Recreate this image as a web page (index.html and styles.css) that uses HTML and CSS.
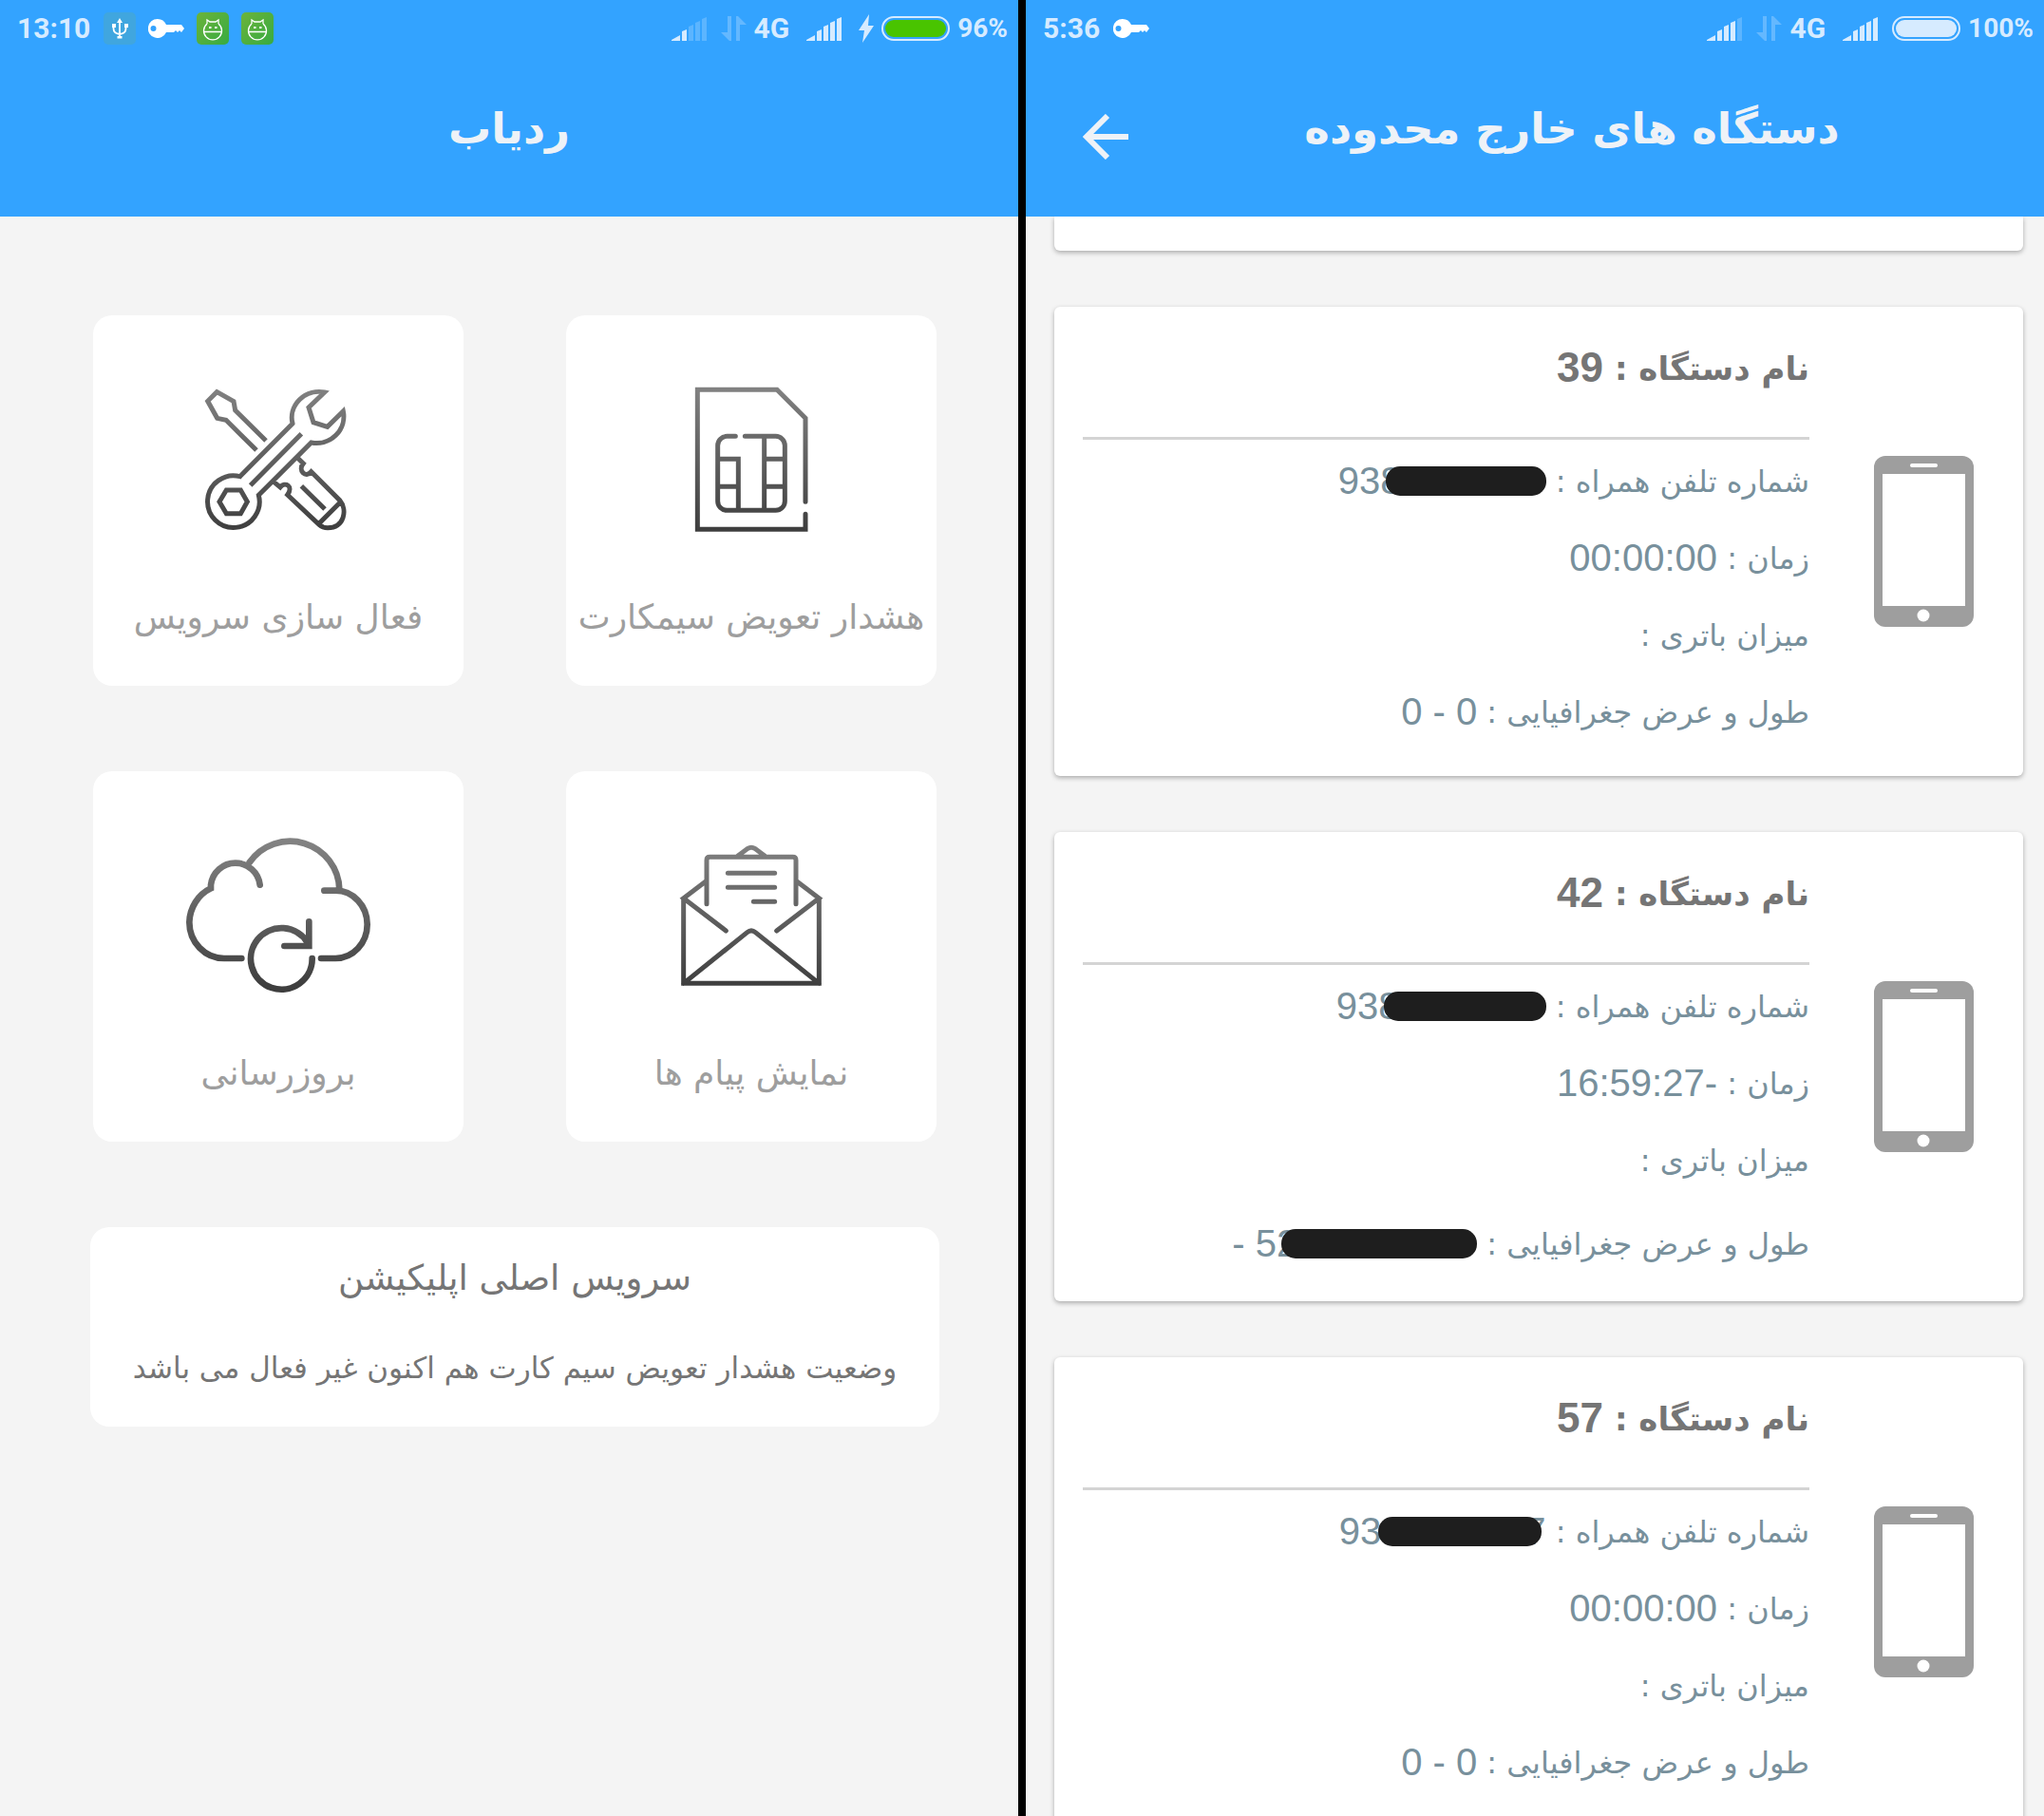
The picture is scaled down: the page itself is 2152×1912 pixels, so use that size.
FILE: index.html
```html
<!DOCTYPE html>
<html lang="fa">
<head>
<meta charset="utf-8">
<meta name="viewport" content="width=device-width, initial-scale=1">
<title>ردیاب</title>
<link rel="stylesheet" href="styles.css">
</head>
<body>
<svg class="defs" aria-hidden="true">
  <defs>
    <linearGradient id="ink" gradientUnits="userSpaceOnUse" x1="0" y1="290" x2="0" y2="745">
      <stop offset="0" stop-color="#828282"/><stop offset="1" stop-color="#3e3e3e"/>
    </linearGradient>
    <linearGradient id="green" x1="0" y1="0" x2="1" y2="1">
      <stop offset="0" stop-color="#6cb33a"/><stop offset="1" stop-color="#37ab42"/>
    </linearGradient>
    <symbol id="key" viewBox="0 0 38 20">
      <path fill="#fff" fill-rule="evenodd" d="M10 0a10 10 0 0 1 9 6h16l3 4-3 4-2-2-2 2-2-2-2 2h-8A10 10 0 1 1 10 0zM5.500 7a3 3 0 1 0 0 6 3 3 0 0 0 0-6z"/>
    </symbol>
    <symbol id="cat" viewBox="0 0 34 34">
      <rect width="34" height="34" rx="5" fill="url(#green)"/>
      <path fill="none" stroke="#fff" stroke-width="1.300" d="M11 12l0-4 3 2h6l3-2 0 4M11 12a9.500 9.500 0 1 0 12 0M8 20.500h18"/>
      <path fill="#fff" d="M13 15h2.500v2H13zM19 15h2.500v2H19z"/>
    </symbol>
    <symbol id="transfer" viewBox="0 0 27 26">
      <path fill="#d6ebff" opacity=".3" d="M7 0h4v26H9l-9-9h7zM16 0h2l9 9h-7v17h-4z"/>
    </symbol>
    <symbol id="phone" viewBox="0 0 105 180">
      <rect width="105" height="180" rx="12" fill="#9e9e9e"/>
      <path fill="#fff" d="M9 19h87v139H9z"/>
      <rect x="38" y="8" width="29" height="4" rx="2" fill="#fff"/>
      <circle cx="52" cy="168" r="6.500" fill="#fff"/>
    </symbol>
  </defs>
</svg>
<div class="screens">
  <section class="screen">
    <header class="top">
      <div class="status">
        <span class="clock">13:10</span>
        <svg class="badge-icon" viewBox="0 0 34 34"><rect width="34" height="34" rx="5" fill="#40a6df"/><path fill="none" stroke="#fff" stroke-width="1.800" d="M17 10v17M10.500 14v3q0 5 6.500 6 6.500-1 6.500-6v-3"/><path fill="#fff" d="M17 6l3 5h-6zM9 12h4v4H9zM22 12h4v4h-4zM14.500 25h5v2.500h-5z"/></svg>
        <svg class="key-icon"><use href="#key"/></svg>
        <svg class="badge-icon"><use href="#cat"/></svg>
        <svg class="badge-icon"><use href="#cat"/></svg>
        <div class="status-end">
          <svg class="signal" viewBox="0 0 37 25"><path d="M0 25v-1l9-5v6zM11 25V15l5-2v12z"/><path opacity=".25" d="M18 25V10l5-2v17zM25 25V6l5-2v21zM32 25V2l5-2v25z"/></svg>
          <svg class="transfer"><use href="#transfer"/></svg>
          <span class="network">4G</span>
          <svg class="signal" viewBox="0 0 37 25"><path d="M0 25v-1l9-5v6zM11 25V15l5-2v12zM18 25V10l5-2v17zM25 25V6l5-2v21zM32 25V2l5-2v25z"/></svg>
          <svg class="bolt" viewBox="0 0 19 30"><path d="M14 0L3 17h6L7 30 19 12h-6z"/></svg>
          <span class="battery"><span class="charge charging"></span></span>
          <span class="percent">96%</span>
        </div>
      </div>
      <div class="appbar"><h1>ردیاب</h1></div>
    </header>
    <main class="home">
      <div class="tiles">
        <button class="tile" type="button">
          <svg class="tile-icon" viewBox="339 246 600 540"><g class="line"><path d="M600 462L503 366 498 338 445 308 416 337 446 391 474 397 570 492M684 408A86 82 0 0 1 785 309L735 357 750 404 794 418 844 369A86 84 0 0 1 743 468L577 634A82 82 0 1 1 518 575L684 408V404M551 603L712 440M475 618H520L541 655 520 692H475L453 655ZM702 518L718 534C700 555 725 582 743 560L833 650C858 680 848 737 795 737Q779 737 768 727L668 633C688 605 660 590 645 609L625 592M835 656L766 725M712 605L786 678"/></g></svg>
          <span>فعال سازی سرویس</span>
        </button>
        <button class="tile" type="button">
          <svg class="tile-icon" viewBox="363 246 600 540"><g class="line round"><path d="M834 655V391L744 301H493V742H834V694M613 448H586A29 29 0 0 0 557 477V653A29 29 0 0 0 586 682H740A29 29 0 0 0 769 653V477A29 29 0 0 0 740 448H643M557 520H622V682M557 607H622M704 448V682M704 520H769M704 607H769"/></g></svg>
          <span>هشدار تعویض سیمکارت</span>
        </button>
        <button class="tile" type="button">
          <svg class="tile-icon" viewBox="339 246 600 540"><g class="line round thick"><path d="M523 657H468A110 114 0 0 1 358 543A118 122 0 0 1 426 436V425A78 78 0 0 1 581 425M548 354A156 156 0 0 1 832 440M784 443H820A100 107 0 0 1 820 657H774M746 657A97 97 0 1 1 732 608M736 541V618H658"/></g></svg>
          <span>بروزرسانی</span>
        </button>
        <button class="tile" type="button">
          <svg class="tile-icon" viewBox="363 246 600 540"><g class="line round"><path d="M449 470V736H877V470M449 736L650 575Q663 564 676 575L877 736M583 570L449 467 519 414M743 570L877 467 807 414M522 485V347Q522 337 532 337H794Q804 337 804 347V485M620 334L652 310Q663 303 674 310L706 334M589 388H737M589 433H737M670 478H737"/></g></svg>
          <span>نمایش پیام ها</span>
        </button>
      </div>
      <section class="service">
        <h2>سرویس اصلی اپلیکیشن</h2>
        <p>وضعیت هشدار تعویض سیم کارت هم اکنون غیر فعال می باشد</p>
      </section>
    </main>
  </section>

  <section class="screen">
    <header class="top">
      <div class="status">
        <span class="clock">5:36</span>
        <svg class="key-icon"><use href="#key"/></svg>
        <div class="status-end">
          <svg class="signal" viewBox="0 0 37 25"><path d="M0 25v-1l9-5v6zM11 25V15l5-2v12zM18 25V10l5-2v17zM25 25V6l5-2v21z"/><path opacity=".25" d="M32 25V2l5-2v25z"/></svg>
          <svg class="transfer"><use href="#transfer"/></svg>
          <span class="network">4G</span>
          <svg class="signal" viewBox="0 0 37 25"><path d="M0 25v-1l9-5v6zM11 25V15l5-2v12zM18 25V10l5-2v17zM25 25V6l5-2v21zM32 25V2l5-2v25z"/></svg>
          <span class="battery"><span class="charge"></span></span>
          <span class="percent">100%</span>
        </div>
      </div>
      <div class="appbar with-back">
        <button class="back" type="button" aria-label="بازگشت"><svg viewBox="0 0 48 48"><path d="M26 2L4 24l22 22M4 24h44"/></svg></button>
        <h1>دستگاه های خارج محدوده</h1>
      </div>
    </header>
    <main class="devices">
      <div class="card card-end"></div>
      <article class="card">
        <svg class="phone"><use href="#phone"/></svg>
        <div class="info">
          <h2>نام دستگاه : <span class="num">39</span></h2>
          <p>شماره تلفن همراه : <span class="num masked">938<span class="mask" style="width:169px"></span></span></p>
          <p>زمان : <span class="num">00:00:00</span></p>
          <p>میزان باتری :</p>
          <p>طول و عرض جغرافیایی : <span class="num">0 - 0</span></p>
        </div>
      </article>
      <article class="card">
        <svg class="phone"><use href="#phone"/></svg>
        <div class="info">
          <h2>نام دستگاه : <span class="num">42</span></h2>
          <p>شماره تلفن همراه : <span class="num masked">938<span class="mask" style="width:171px"></span></span></p>
          <p>زمان : <span class="num">16:59:27-</span></p>
          <p>میزان باتری :</p>
          <p class="clipped">طول و عرض جغرافیایی : <span class="num masked">- 52<span class="mask" style="width:206px"></span></span></p>
        </div>
      </article>
      <article class="card">
        <svg class="phone"><use href="#phone"/></svg>
        <div class="info">
          <h2>نام دستگاه : <span class="num">57</span></h2>
          <p>شماره تلفن همراه : <span class="num masked tail">93<span class="mask" style="width:172px"></span><span class="last">7</span></span></p>
          <p>زمان : <span class="num">00:00:00</span></p>
          <p>میزان باتری :</p>
          <p>طول و عرض جغرافیایی : <span class="num">0 - 0</span></p>
        </div>
      </article>
    </main>
  </section>
</div>
</body>
</html>
```
FILE: styles.css
```css
* { box-sizing: border-box; }
body {
  margin: 0;
  background: #000;
  font-family: "DejaVu Sans", sans-serif;
}
h1, h2, p { margin: 0; }
button { border: 0; padding: 0; font: inherit; cursor: pointer; }
.defs { position: absolute; width: 0; height: 0; }

.screens {
  display: grid;
  grid-template-columns: minmax(0, 1fr) minmax(0, 1fr);
  column-gap: 8px;
  height: 100vh;
}
.screen {
  display: flex;
  flex-direction: column;
  min-height: 0;
  overflow: hidden;
  background: #f4f4f4;
}

/* header */
.top {
  flex: none;
  height: 228px;
  background: #33a3ff;
}
.status {
  display: flex;
  align-items: center;
  gap: 13px;
  height: 60px;
  padding: 0 11px 0 18px;
  font-family: Roboto, sans-serif;
  font-weight: 700;
  font-size: 30px;
  line-height: 32px;
  color: #d6ebff;
}
.clock { margin-right: 1px; }
.badge-icon { width: 34px; height: 34px; }
.key-icon { width: 38px; height: 20px; }
.status-end { display: flex; align-items: center; gap: 8px; margin-left: auto; }
.signal { width: 37px; height: 25px; margin: 0 7px 0 10px; fill: #d6ebff; }
.transfer { width: 27px; height: 26px; }
.bolt { width: 19px; height: 30px; fill: #d6ebff; }
.battery {
  display: flex;
  width: 72px;
  height: 26px;
  padding: 2px;
  border: 2px solid #d6ebff;
  border-radius: 13px;
}
.charge { flex: 1; border-radius: 9px; background: #d6ebff; }
.charging { background: #49c400; }
.percent { font-size: 28px; }
.appbar {
  display: flex;
  align-items: center;
  height: 168px;
  color: #eef2f7;
}
.appbar h1 {
  flex: 1;
  direction: rtl;
  text-align: center;
  font-size: 45px;
  line-height: 60px;
  padding-bottom: 16px;
}
.with-back { padding-left: 60px; padding-right: 30px; }
.back { width: 48px; height: 48px; background: none; }
.back svg { display: block; width: 48px; height: 48px; fill: none; stroke: #eef2f7; stroke-width: 6; }

/* home */
.home { padding: 104px 83px 40px 95px; direction: rtl; }
.tiles {
  display: grid;
  grid-template-columns: 1fr 1fr;
  gap: 90px 108px;
  padding: 0 3px;
  direction: ltr;
}
.tile {
  display: flex;
  flex-direction: column;
  align-items: center;
  aspect-ratio: 1;
  padding-top: 60px;
  border-radius: 20px;
  background: #fff;
  color: #9e9e9e;
  direction: rtl;
  font-size: 36px;
  line-height: 48px;
  white-space: nowrap;
}
.tile span { margin-top: 54px; }
.tile-icon { flex: none; width: 200px; height: 180px; }
.line { fill: none; stroke: url(#ink); stroke-width: 15; }
.round { stroke-linecap: round; }
.thick { stroke-width: 20; }
.service {
  margin-top: 90px;
  height: 210px;
  padding-top: 30px;
  border-radius: 20px;
  background: #fff;
  color: #757575;
  text-align: center;
  white-space: nowrap;
}
.service h2 { font-size: 37px; font-weight: 400; line-height: 48px; }
.service p { margin-top: 48px; font-size: 31px; line-height: 44px; }

/* device list */
.devices {
  display: flex;
  flex-direction: column;
  gap: 59px;
  padding: 0 22px 0 30px;
  direction: rtl;
  overflow: hidden;
}
.card {
  display: flex;
  align-items: center;
  gap: 68px;
  flex: none;
  padding: 0 52px 0 30px;
  height: 494px;
  border-radius: 6px;
  background: #fff;
  box-shadow: 0 2px 5px rgba(0, 0, 0, .3);
}
.card-end { height: 36px; border-radius: 0 0 6px 6px; }
.phone { flex: none; width: 105px; height: 180px; }
.info { flex: 1; align-self: stretch; white-space: nowrap; color: #78909c; }
.info h2 {
  height: 140px;
  margin-bottom: 4px;
  border-bottom: 3px solid #d4d4d4;
  color: #757575;
  font-size: 34px;
  line-height: 130px;
}
.info p { height: 81px; font-size: 32px; line-height: 81px; }
.info .clipped { padding-top: 7px; }
.num {
  display: inline-block;
  direction: ltr;
  font-family: "Liberation Sans", sans-serif;
  font-size: 40px;
  line-height: 40px;
  vertical-align: -2px;
}
.info h2 .num { font-size: 44px; }
.mask {
  display: inline-block;
  position: relative;
  height: 31px;
  margin-left: -17px;
  border-radius: 15px;
  background: #1e1e1e;
  vertical-align: -2px;
}
.tail .mask { margin-left: -3px; }
.last { margin-left: -18px; }
```
